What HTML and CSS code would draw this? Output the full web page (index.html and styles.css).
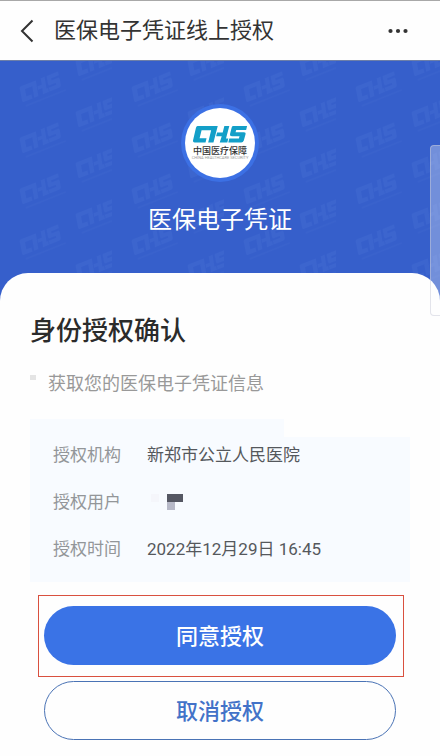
FILE: index.html
```html
<!DOCTYPE html>
<html lang="zh-CN">
<head>
<meta charset="utf-8">
<meta name="viewport" content="width=device-width, initial-scale=1">
<title>医保电子凭证线上授权</title>
<link rel="stylesheet" href="styles.css">
</head>
<body>
<header class="topbar">
  <button class="icon-button" type="button" aria-label="返回">
    <svg width="14" height="24" viewBox="0 0 14 24" fill="none" stroke="#333" stroke-width="2"><path d="M12.500 1.500 2 12l10.500 10.500"/></svg>
  </button>
  <h1 class="topbar-title">医保电子凭证线上授权</h1>
  <button class="icon-button" type="button" aria-label="更多">
    <svg width="20" height="6" viewBox="0 0 20 6" fill="#333"><circle cx="2.500" cy="3" r="2.100"/><circle cx="10" cy="3" r="2.100"/><circle cx="17.500" cy="3" r="2.100"/></svg>
  </button>
</header>
<main class="page">
  <section class="hero">
    <svg class="watermark" width="100%" height="100%" aria-hidden="true">
      <defs>
        <g id="chs">
          <path d="M14 0H75L62 50H46L55 13H26L20 37H41L38 50H5Q-1 50 0 44L9 5Q10 0 14 0Z"/>
          <path d="M73 20H90L95 0H110L100 38H107L104 50H81L87 31H70Z"/>
          <path d="M121 0H164L161 12H131L129 19H154Q161 19 159 26L154 44Q152 50 146 50H107L110 38H139L141 31H118Q111 31 112 25L117 5Q118 0 121 0Z"/>
        </g>
        <pattern id="marks" width="112" height="51" patternUnits="userSpaceOnUse">
          <g fill="#5a83e0" opacity=".16">
            <g transform="translate(17 27) rotate(-22) scale(.27 .31)"><use href="#chs"/><path d="M5 62H165V67H5Z" opacity=".5"/></g>
            <g transform="translate(73 52) rotate(-22) scale(.27 .31)"><use href="#chs"/></g>
            <g transform="translate(73 1) rotate(-22) scale(.27 .31)"><use href="#chs"/><path d="M5 62H165V67H5Z" opacity=".5"/></g>
          </g>
        </pattern>
      </defs>
      <rect width="100%" height="100%" fill="url(#marks)"/>
    </svg>
    <svg class="logo" width="78" height="78" viewBox="0 0 78 78" role="img" aria-label="中国医疗保障">
      <circle cx="39" cy="39" r="39" fill="#3c70e4"/>
      <circle cx="39" cy="39" r="35" fill="#fff"/>
      <use href="#chs" transform="translate(12 22) scale(.33)" fill="#139fc8"/>
      <text class="logo-name" x="39" y="50" text-anchor="middle">中国医疗保障</text>
      <text class="logo-sub" x="39" y="55" text-anchor="middle">CHINA HEALTHCARE SECURITY</text>
    </svg>
    <p class="hero-title">医保电子凭证</p>
  </section>
  <section class="card">
    <h2 class="card-title">身份授权确认</h2>
    <p class="scope">获取您的医保电子凭证信息</p>
    <dl class="details">
      <div class="row"><dt>授权机构</dt><dd>新郑市公立人民医院</dd></div>
      <div class="row"><dt>授权用户</dt><dd><svg class="masked" width="40" height="16" viewBox="0 0 40 16" aria-label="已隐藏"><path fill="#f5f6fb" d="M4 0h8v8H4z"/><path fill="#555763" d="M20 0h16v8H20z"/><path fill="#b7b9c8" d="M20 8h8v8h-8z"/></svg></dd></div>
      <div class="row"><dt>授权时间</dt><dd>2022年12月29日 16:45</dd></div>
    </dl>
    <div class="actions">
      <div class="highlight"><button class="button primary" type="button">同意授权</button></div>
      <button class="button secondary" type="button">取消授权</button>
    </div>
  </section>
  <div class="side-handle"></div>
</main>
</body>
</html>
```
FILE: styles.css
```css
* {
  box-sizing: border-box;
}

body {
  margin: 0;
  background: #fefefe;
  color: #333;
  font-family: Roboto, "Noto Sans CJK SC", sans-serif;
}

h1, h2, p, dl, dd {
  margin: 0;
}

button {
  font: inherit;
  cursor: pointer;
}

.topbar {
  display: flex;
  align-items: center;
  height: 61px;
  padding: 0 32px 0 20px;
  border-top: 1px solid #a8a8a8;
  border-bottom: 1px solid #6d7fa8;
  background: #fefefe;
}

.icon-button {
  display: flex;
  padding: 0;
  border: 0;
  background: none;
}

.topbar-title {
  flex: 1;
  margin-left: 20px;
  font-size: 22px;
  font-weight: 400;
  line-height: 32px;
}

.page {
  position: relative;
}

.hero {
  position: relative;
  display: flex;
  flex-direction: column;
  align-items: center;
  gap: 22px;
  padding: 43px 0 67px;
  background: #365fcb;
}

.watermark {
  position: absolute;
  inset: 0;
}

.logo {
  position: relative;
}

.logo-name {
  font-size: 9px;
  font-weight: 500;
  fill: #333;
}

.logo-sub {
  font-size: 4px;
  fill: #999;
}

.hero-title {
  position: relative;
  color: #fff;
  font-size: 24px;
  line-height: 32px;
}

.card {
  position: relative;
  margin-top: -30px;
  padding: 38px 30px 16px;
  border-radius: 28px 28px 0 0;
  background: #fefefe;
}

.card-title {
  color: #2b2b2b;
  font-size: 26px;
  font-weight: 500;
  line-height: 40px;
}

.scope {
  display: flex;
  gap: 12px;
  margin-top: 17px;
  color: #999;
  font-size: 18px;
  line-height: 32px;
}

.scope::before {
  content: "";
  width: 6px;
  height: 5px;
  margin-top: 7px;
  background: #e4e4e4;
}

.details {
  display: grid;
  gap: 15px;
  margin-top: 19px;
  padding: 20px 23px 17px;
  background:
    linear-gradient(#fefefe, #fefefe) right top / 126px 18px no-repeat,
    #f8fbff;
  font-size: 17px;
  line-height: 32px;
}

.row {
  display: flex;
  gap: 26px;
}

.row dt {
  color: #939699;
}

.row dd {
  color: #55585c;
}

.masked {
  display: block;
  margin-top: 8px;
}

.actions {
  display: grid;
  gap: 16px;
  margin-top: 24px;
  padding: 0 14px;
}

.highlight {
  position: relative;
}

.highlight::before {
  content: "";
  position: absolute;
  inset: -11px -8px -12px -6px;
  border: 1px solid #d9503f;
}

.button {
  position: relative;
  display: block;
  width: 100%;
  height: 59px;
  padding: 0 0 3px;
  border: 0;
  border-radius: 30px;
  font-size: 22px;
  font-weight: 500;
}

.primary {
  background: #3a73e6;
  color: #fff;
}

.secondary {
  border: 1px solid #4a73b5;
  background: #fefefe;
  color: #4272c8;
}

.side-handle {
  position: absolute;
  top: 84px;
  right: 0;
  width: 10px;
  height: 171px;
  border: 1px solid rgba(200, 202, 215, 0.5);
  border-right: 0;
  border-radius: 4px 0 0 4px;
  background: rgba(255, 255, 255, 0.3);
}
```
